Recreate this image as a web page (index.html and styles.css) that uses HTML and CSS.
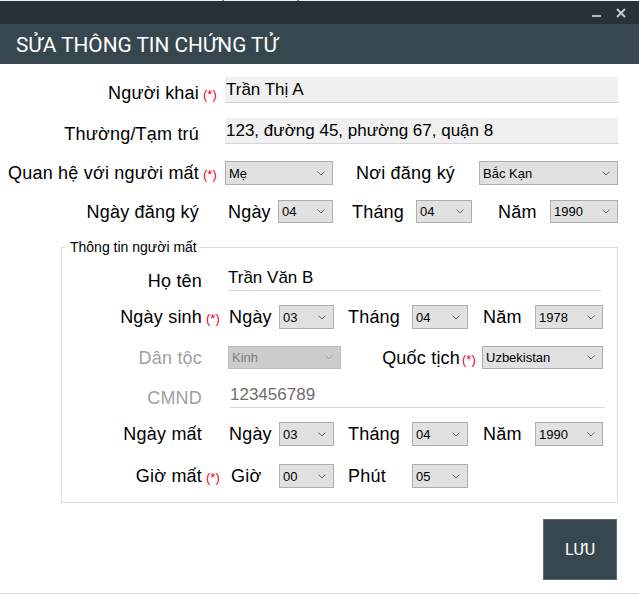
FILE: index.html
```html
<!DOCTYPE html>
<html lang="vi">
<head>
<meta charset="utf-8">
<title>Sửa thông tin chứng tử</title>
<link rel="stylesheet" href="styles.css">
</head>
<body>
<div class="window">
  <div class="topstrip"><i class="mark o first"></i><i class="mark b"></i><i class="mark o second"></i><i class="mark b"></i></div>
  <div class="titlebar">
    <svg class="ctl-min" width="9" height="10" viewBox="0 0 9 10"><rect x="0" y="7" width="9" height="2" fill="#b3b8bb"/></svg>
    <svg class="ctl-close" width="10" height="10" viewBox="0 0 10 10"><path d="M1 1L9 9M9 1L1 9" stroke="#c7cbce" stroke-width="1.8" fill="none"/></svg>
  </div>
  <div class="header"><h1>SỬA THÔNG TIN CHỨNG TỬ</h1></div>

  <div class="form">
    <div class="row text r1">
      <div class="lbl top-l"><span class="t">Người khai</span><span class="req">(*)</span></div>
      <div class="tin">Trần Thị A</div>
    </div>
    <div class="row text r2">
      <div class="lbl top-l"><span class="t">Thường/Tạm trú</span></div>
      <div class="tin">123, đường 45, phường 67, quận 8</div>
    </div>
    <div class="row r3">
      <div class="lbl top-l"><span class="t">Quan hệ với người mất</span><span class="req">(*)</span></div>
      <div class="sel w108"><span>Mẹ</span><svg viewBox="0 0 8 5"><polyline points="0.5,0.5 4,4 7.5,0.5"/></svg></div>
      <span class="s noi">Nơi đăng ký</span>
      <div class="sel w139"><span>Bắc Kạn</span><svg viewBox="0 0 8 5"><polyline points="0.5,0.5 4,4 7.5,0.5"/></svg></div>
    </div>
    <div class="row r4">
      <div class="lbl top-l"><span class="t">Ngày đăng ký</span></div>
      <span class="s tday">Ngày</span>
      <div class="sel w55"><span>04</span><svg viewBox="0 0 8 5"><polyline points="0.5,0.5 4,4 7.5,0.5"/></svg></div>
      <span class="s tmonth">Tháng</span>
      <div class="sel w56"><span>04</span><svg viewBox="0 0 8 5"><polyline points="0.5,0.5 4,4 7.5,0.5"/></svg></div>
      <span class="s tyear">Năm</span>
      <div class="sel w68"><span>1990</span><svg viewBox="0 0 8 5"><polyline points="0.5,0.5 4,4 7.5,0.5"/></svg></div>
    </div>

    <fieldset class="group">
      <legend>Thông tin người mất</legend>
      <div class="row text g1">
        <div class="lbl grp-l"><span class="t">Họ tên</span></div>
        <div class="uline name">Trần Văn B</div>
      </div>
      <div class="row g2">
        <div class="lbl grp-l"><span class="t">Ngày sinh</span><span class="req">(*)</span></div>
        <span class="s gday">Ngày</span>
        <div class="sel w55"><span>03</span><svg viewBox="0 0 8 5"><polyline points="0.5,0.5 4,4 7.5,0.5"/></svg></div>
        <span class="s gmonth">Tháng</span>
        <div class="sel w56"><span>04</span><svg viewBox="0 0 8 5"><polyline points="0.5,0.5 4,4 7.5,0.5"/></svg></div>
        <span class="s gyear">Năm</span>
        <div class="sel w68"><span>1978</span><svg viewBox="0 0 8 5"><polyline points="0.5,0.5 4,4 7.5,0.5"/></svg></div>
      </div>
      <div class="row g3">
        <div class="lbl grp-l muted"><span class="t">Dân tộc</span></div>
        <div class="sel dis w113"><span>Kinh</span><svg viewBox="0 0 8 5"><polyline points="0.5,0.5 4,4 7.5,0.5"/></svg></div>
        <div class="lbl qt"><span class="t">Quốc tịch</span><span class="req">(*)</span></div>
        <div class="sel w121"><span>Uzbekistan</span><svg viewBox="0 0 8 5"><polyline points="0.5,0.5 4,4 7.5,0.5"/></svg></div>
      </div>
      <div class="row text g4">
        <div class="lbl grp-l muted"><span class="t">CMND</span></div>
        <div class="uline cmnd">123456789</div>
      </div>
      <div class="row g5">
        <div class="lbl grp-l"><span class="t">Ngày mất</span></div>
        <span class="s gday">Ngày</span>
        <div class="sel w55"><span>03</span><svg viewBox="0 0 8 5"><polyline points="0.5,0.5 4,4 7.5,0.5"/></svg></div>
        <span class="s gmonth">Tháng</span>
        <div class="sel w56"><span>04</span><svg viewBox="0 0 8 5"><polyline points="0.5,0.5 4,4 7.5,0.5"/></svg></div>
        <span class="s gyear">Năm</span>
        <div class="sel w68"><span>1990</span><svg viewBox="0 0 8 5"><polyline points="0.5,0.5 4,4 7.5,0.5"/></svg></div>
      </div>
      <div class="row g6">
        <div class="lbl grp-l"><span class="t">Giờ mất</span><span class="req">(*)</span></div>
        <span class="s ghour">Giờ</span>
        <div class="sel w55"><span>00</span><svg viewBox="0 0 8 5"><polyline points="0.5,0.5 4,4 7.5,0.5"/></svg></div>
        <span class="s gmonth">Phút</span>
        <div class="sel w56"><span>05</span><svg viewBox="0 0 8 5"><polyline points="0.5,0.5 4,4 7.5,0.5"/></svg></div>
      </div>
    </fieldset>

    <div class="footer">
      <button class="save" type="button">LƯU</button>
    </div>
  </div>
</div>
</body>
</html>
```

FILE: styles.css
```css
* { box-sizing: border-box; margin: 0; padding: 0; }
html, body { width: 639px; height: 594px; overflow: hidden; background: #fff; }
body { font-family: "Liberation Sans", Arial, sans-serif; color: #000; }

.window {
  height: 594px;
  border-bottom: 1px solid #dcdcdc;
  display: flex;
  flex-direction: column;
}

.topstrip { height: 1px; background: #eef0f3; display: flex; flex: none; }
.topstrip .mark { width: 1px; height: 1px; background: #c67b3a; }
.topstrip .mark.b { background: #3b7bd1; }
.topstrip .first { margin-left: 222px; }
.topstrip .second { margin-left: 73px; }

.titlebar {
  height: 23px;
  flex: none;
  background: #263238;
  display: flex;
  justify-content: flex-end;
  align-items: flex-start;
  gap: 15px;
  padding: 7px 13px 0 0;
}
.titlebar svg { display: block; }

.header {
  height: 40px;
  flex: none;
  background: #37474f;
  padding: 2px 0 0 16px;
}
.header h1 {
  font: 400 20.8px/38px Roboto, "Liberation Sans", sans-serif;
  color: #fff;
}

.form { padding-top: 13px; flex: 1; display: flex; flex-direction: column; }

.row { display: flex; align-items: center; flex: none; }
.row.text { align-items: flex-end; }

.lbl { display: flex; align-items: baseline; flex: none; }
.lbl .t, .s { font-size: 18px; line-height: 20px; letter-spacing: 0.2px; white-space: nowrap; }
.lbl .t { text-align: right; }
.req { color: #e8001c; font-size: 13px; line-height: 14px; padding-left: 4px; }

.top-l { width: 225px; }
.top-l .t { width: 199px; }
.grp-l { width: 166px; }
.grp-l .t { width: 140px; }
.qt { width: 141px; }
.qt .t { width: 119px; }
.qt .req { padding-left: 2px; }
.muted .t { color: #a0a0a0; }

.s { flex: none; }
.noi { width: 146px; padding-left: 23px; }
.tday { width: 53px; padding-left: 3px; }
.tmonth { width: 83px; padding-left: 19px; }
.tyear { width: 78px; padding-left: 26px; }
.gday { width: 51px; padding-left: 1px; }
.ghour { width: 51px; padding-left: 3px; }
.gmonth { width: 78px; padding-left: 14px; }
.gyear { width: 67px; padding-left: 15px; }

/* text inputs */
.tin {
  width: 393px;
  height: 26px;
  background: #f0f0f0;
  border-bottom: 1px solid #d4d4d4;
  font-size: 17px;
  line-height: 25px;
  padding-left: 1px;
  white-space: nowrap;
}
.uline {
  height: 26px;
  border-bottom: 1px solid #d9d9d9;
  font-size: 17px;
  line-height: 25px;
  white-space: nowrap;
}
.uline.name { width: 373px; }
.uline.cmnd { width: 375px; margin-left: 2px; color: #6d6d6d; }

/* combo boxes */
.sel {
  flex: none;
  height: 24px;
  display: flex;
  align-items: center;
  justify-content: space-between;
  background: #e1e1e1;
  border: 1px solid #adadad;
  font-size: 13px;
  padding: 0 7px 0 3px;
  white-space: nowrap;
}
.sel svg { width: 8px; height: 5px; display: block; }
.sel polyline { fill: none; stroke: #6a6a6a; stroke-width: 1; }
.sel.dis { background: #cccccc; border-color: #bdbdbd; color: #7d7d7d; }
.sel.dis polyline { stroke: #a3a3a3; }
.w55 { width: 55px; }
.w56 { width: 56px; }
.w68 { width: 68px; }
.w108 { width: 108px; }
.w113 { width: 113px; }
.w121 { width: 121px; }
.w139 { width: 139px; }

/* row vertical rhythm */
.r1 { height: 26px; }
.r2 { height: 26px; margin-top: 15px; }
.r3 { height: 24px; margin-top: 17px; }
.r4 { height: 23px; margin-top: 15px; }
.r4 .sel { height: 23px; }

.group {
  flex: none;
  margin: 16px 0 0 61px;
  width: 557px;
  min-width: 0;
  border: 1px solid #dcdcdc;
  padding: 10px 0 14px 0;
}
.group legend {
  margin-left: 3px;
  padding: 0 2px 0 5px;
  font-size: 14px;
  line-height: 16px;
}
.g1 { height: 26px; }
.g2 { height: 24px; margin-top: 14px; }
.g3 { height: 23px; margin-top: 17px; }
.g3 .sel { height: 23px; }
.g4 { height: 26px; margin-top: 13px; }
.g5 { height: 24px; margin-top: 14px; }
.g6 { height: 24px; margin-top: 18px; }

.footer {
  display: flex;
  justify-content: flex-end;
  padding: 16px 22px 0 0;
}
.save {
  width: 74px;
  height: 61px;
  background: #37474f;
  border: 1px solid #5b6b73;
  color: #fff;
  font: 400 16px Roboto, "Liberation Sans", sans-serif;
  display: flex;
  align-items: center;
  justify-content: center;
}
```
